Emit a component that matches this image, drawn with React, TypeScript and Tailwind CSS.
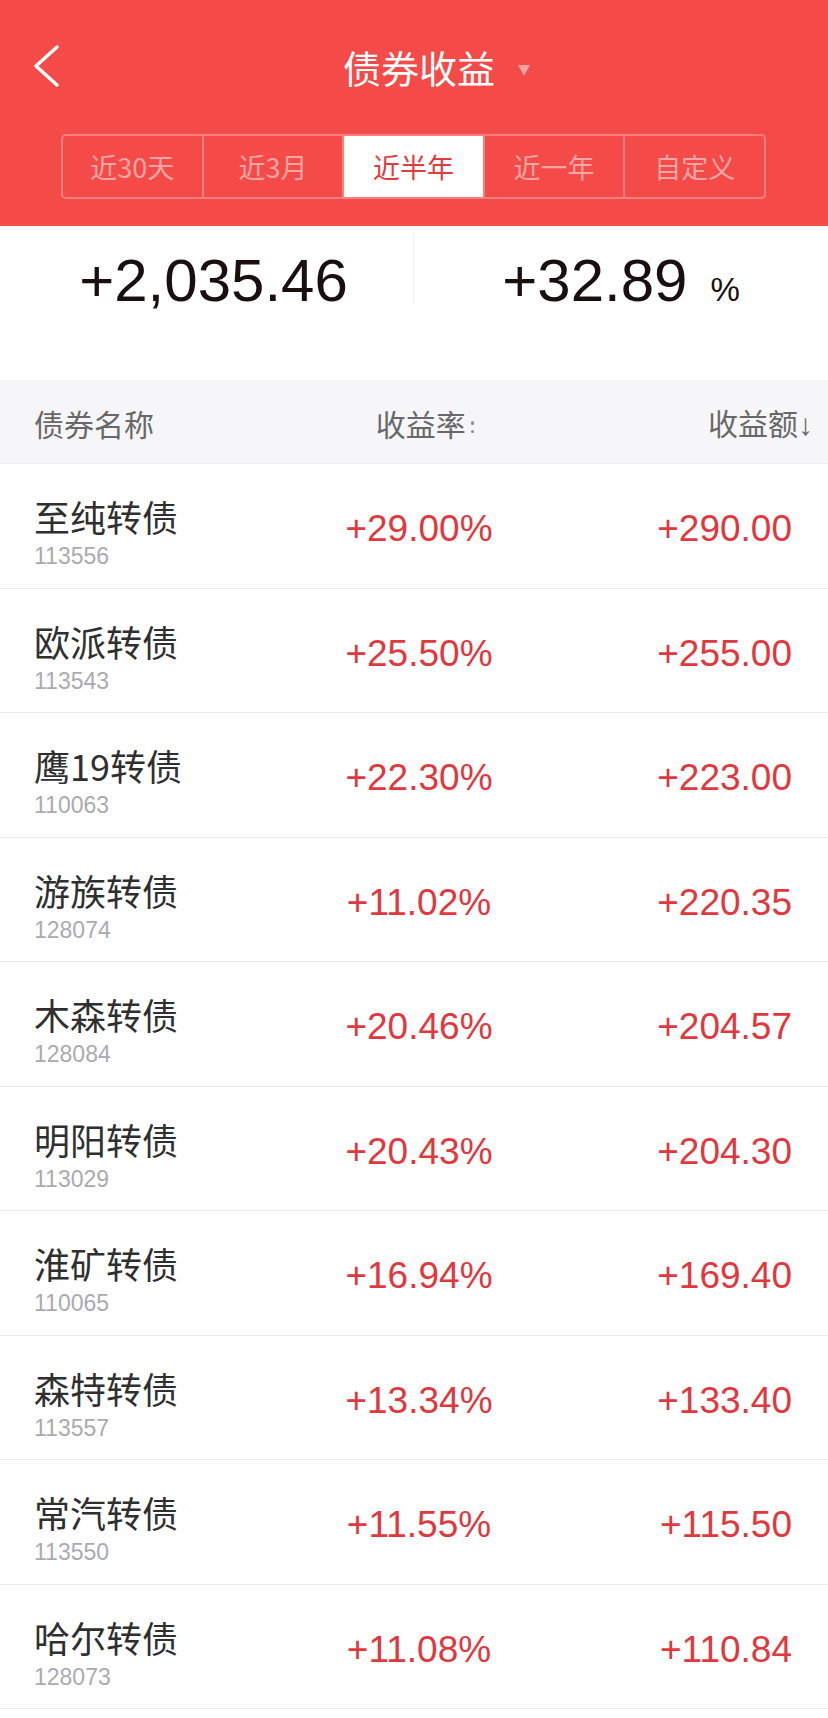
import React from 'react';

const CJK = 'font-["Noto_Sans_CJK_SC",sans-serif]';
const NUM = 'font-["Liberation_Sans","Noto_Sans_CJK_SC",sans-serif]';

const tabs = ['近30天', '近3月', '近半年', '近一年', '自定义'];

const bonds = [
  { name: '至纯转债', code: '113556', rate: '+29.00%', amount: '+290.00' },
  { name: '欧派转债', code: '113543', rate: '+25.50%', amount: '+255.00' },
  { name: '鹰19转债', code: '110063', rate: '+22.30%', amount: '+223.00' },
  { name: '游族转债', code: '128074', rate: '+11.02%', amount: '+220.35' },
  { name: '木森转债', code: '128084', rate: '+20.46%', amount: '+204.57' },
  { name: '明阳转债', code: '113029', rate: '+20.43%', amount: '+204.30' },
  { name: '淮矿转债', code: '110065', rate: '+16.94%', amount: '+169.40' },
  { name: '森特转债', code: '113557', rate: '+13.34%', amount: '+133.40' },
  { name: '常汽转债', code: '113550', rate: '+11.55%', amount: '+115.50' },
  { name: '哈尔转债', code: '128073', rate: '+11.08%', amount: '+110.84' },
];

export default function App() {
  const active = 2;

  return (
    <div className={`w-[828px] min-h-[1718px] bg-white ${CJK}`}>
      {/* red header */}
      <header className="bg-[#f44b49] pb-[27px]">
        <div className="relative h-[134px] flex items-center justify-center pl-[10px]">
          <button className="absolute left-[30px] top-[43px] w-[32px] h-[46px] flex items-center justify-center">
            <svg width="30" height="46" viewBox="0 0 30 46">
              <path d="M26 4 L5 23 L26 42" fill="none" stroke="#fff" strokeWidth="3.5" strokeLinecap="round" strokeLinejoin="round" />
            </svg>
          </button>
          <span className="relative text-[38px] leading-none text-white">
            债券收益
            <svg className="absolute left-[calc(100%+23px)] top-[17px]" width="12" height="11" viewBox="0 0 12 11">
              <path d="M0 0 H12 L6 11 Z" fill="#fba3a1" />
            </svg>
          </span>
        </div>

        <div className="ml-[61px] w-[705px] h-[65px] flex border-2 border-[#f7807e] rounded-[5px] overflow-hidden">
          {tabs.map((t, i) => (
            <div
              key={t}
              className={`flex-1 flex items-center justify-center text-[27px] leading-none ${
                i > 0 ? 'border-l-2 border-[#f7807e]' : ''
              } ${i === active ? 'bg-white text-[#e23b3f]' : 'text-[#fba6a4]'}`}
            >
              {t}
            </div>
          ))}
        </div>
      </header>

      {/* summary */}
      <section className="h-[154px] flex">
        <div className="w-[413px] flex justify-center pt-[25px] pl-[14px]">
          <span className={`${NUM} text-[60px] leading-none text-[#1a0f0f]`}>+2,035.46</span>
        </div>
        <div className="w-px h-[72px] mt-[6px] bg-[#f1f1f3]" />
        <div className="flex-1 flex justify-center items-baseline pt-[25px] h-min">
          <span className={`${NUM} text-[60px] leading-none text-[#1a0f0f]`}>+32.89</span>
          <span className={`${NUM} text-[33px] leading-none text-[#1a0f0f] ml-[23px]`}>%</span>
        </div>
      </section>

      {/* table head */}
      <div className="h-[84px] bg-[#f6f6f8] border-b border-[#ececee] flex items-center pl-[34px] pr-[15px] pt-[3px] text-[30px] leading-none text-[#686868]">
        <div className="w-[300px]">债券名称</div>
        <div className="w-[170px] flex items-center justify-center pl-[12px]">
          收益率
          <span className="ml-[5px] mt-[8px] flex flex-col gap-[5px]">
            <span className="w-[3.5px] h-[3.5px] rounded-full bg-[#8c8c8c]" />
            <span className="w-[3.5px] h-[3.5px] rounded-full bg-[#8c8c8c]" />
          </span>
        </div>
        <div className="flex-1 text-right">
          收益额<span className={`${NUM} text-[30px] font-light`}>↓</span>
        </div>
      </div>

      {/* rows */}
      {bonds.map(b => (
        <div key={b.code} className="h-[124.5px] box-border border-b border-[#ececee] flex items-start pl-[34px] pr-[36px]">
          <div className="w-[300px] pt-[34px]">
            <div className="text-[36px] leading-none text-[#2f2f2f]">{b.name}</div>
            <div className={`${NUM} text-[23px] leading-none text-[#abaab0] mt-[11px]`}>{b.code}</div>
          </div>
          <div className={`${NUM} w-[170px] pt-[46px] text-center text-[37px] leading-none text-[#e0383e]`}>{b.rate}</div>
          <div className={`${NUM} flex-1 pt-[46px] text-right text-[37px] leading-none text-[#e0383e]`}>{b.amount}</div>
        </div>
      ))}
    </div>
  );
}
